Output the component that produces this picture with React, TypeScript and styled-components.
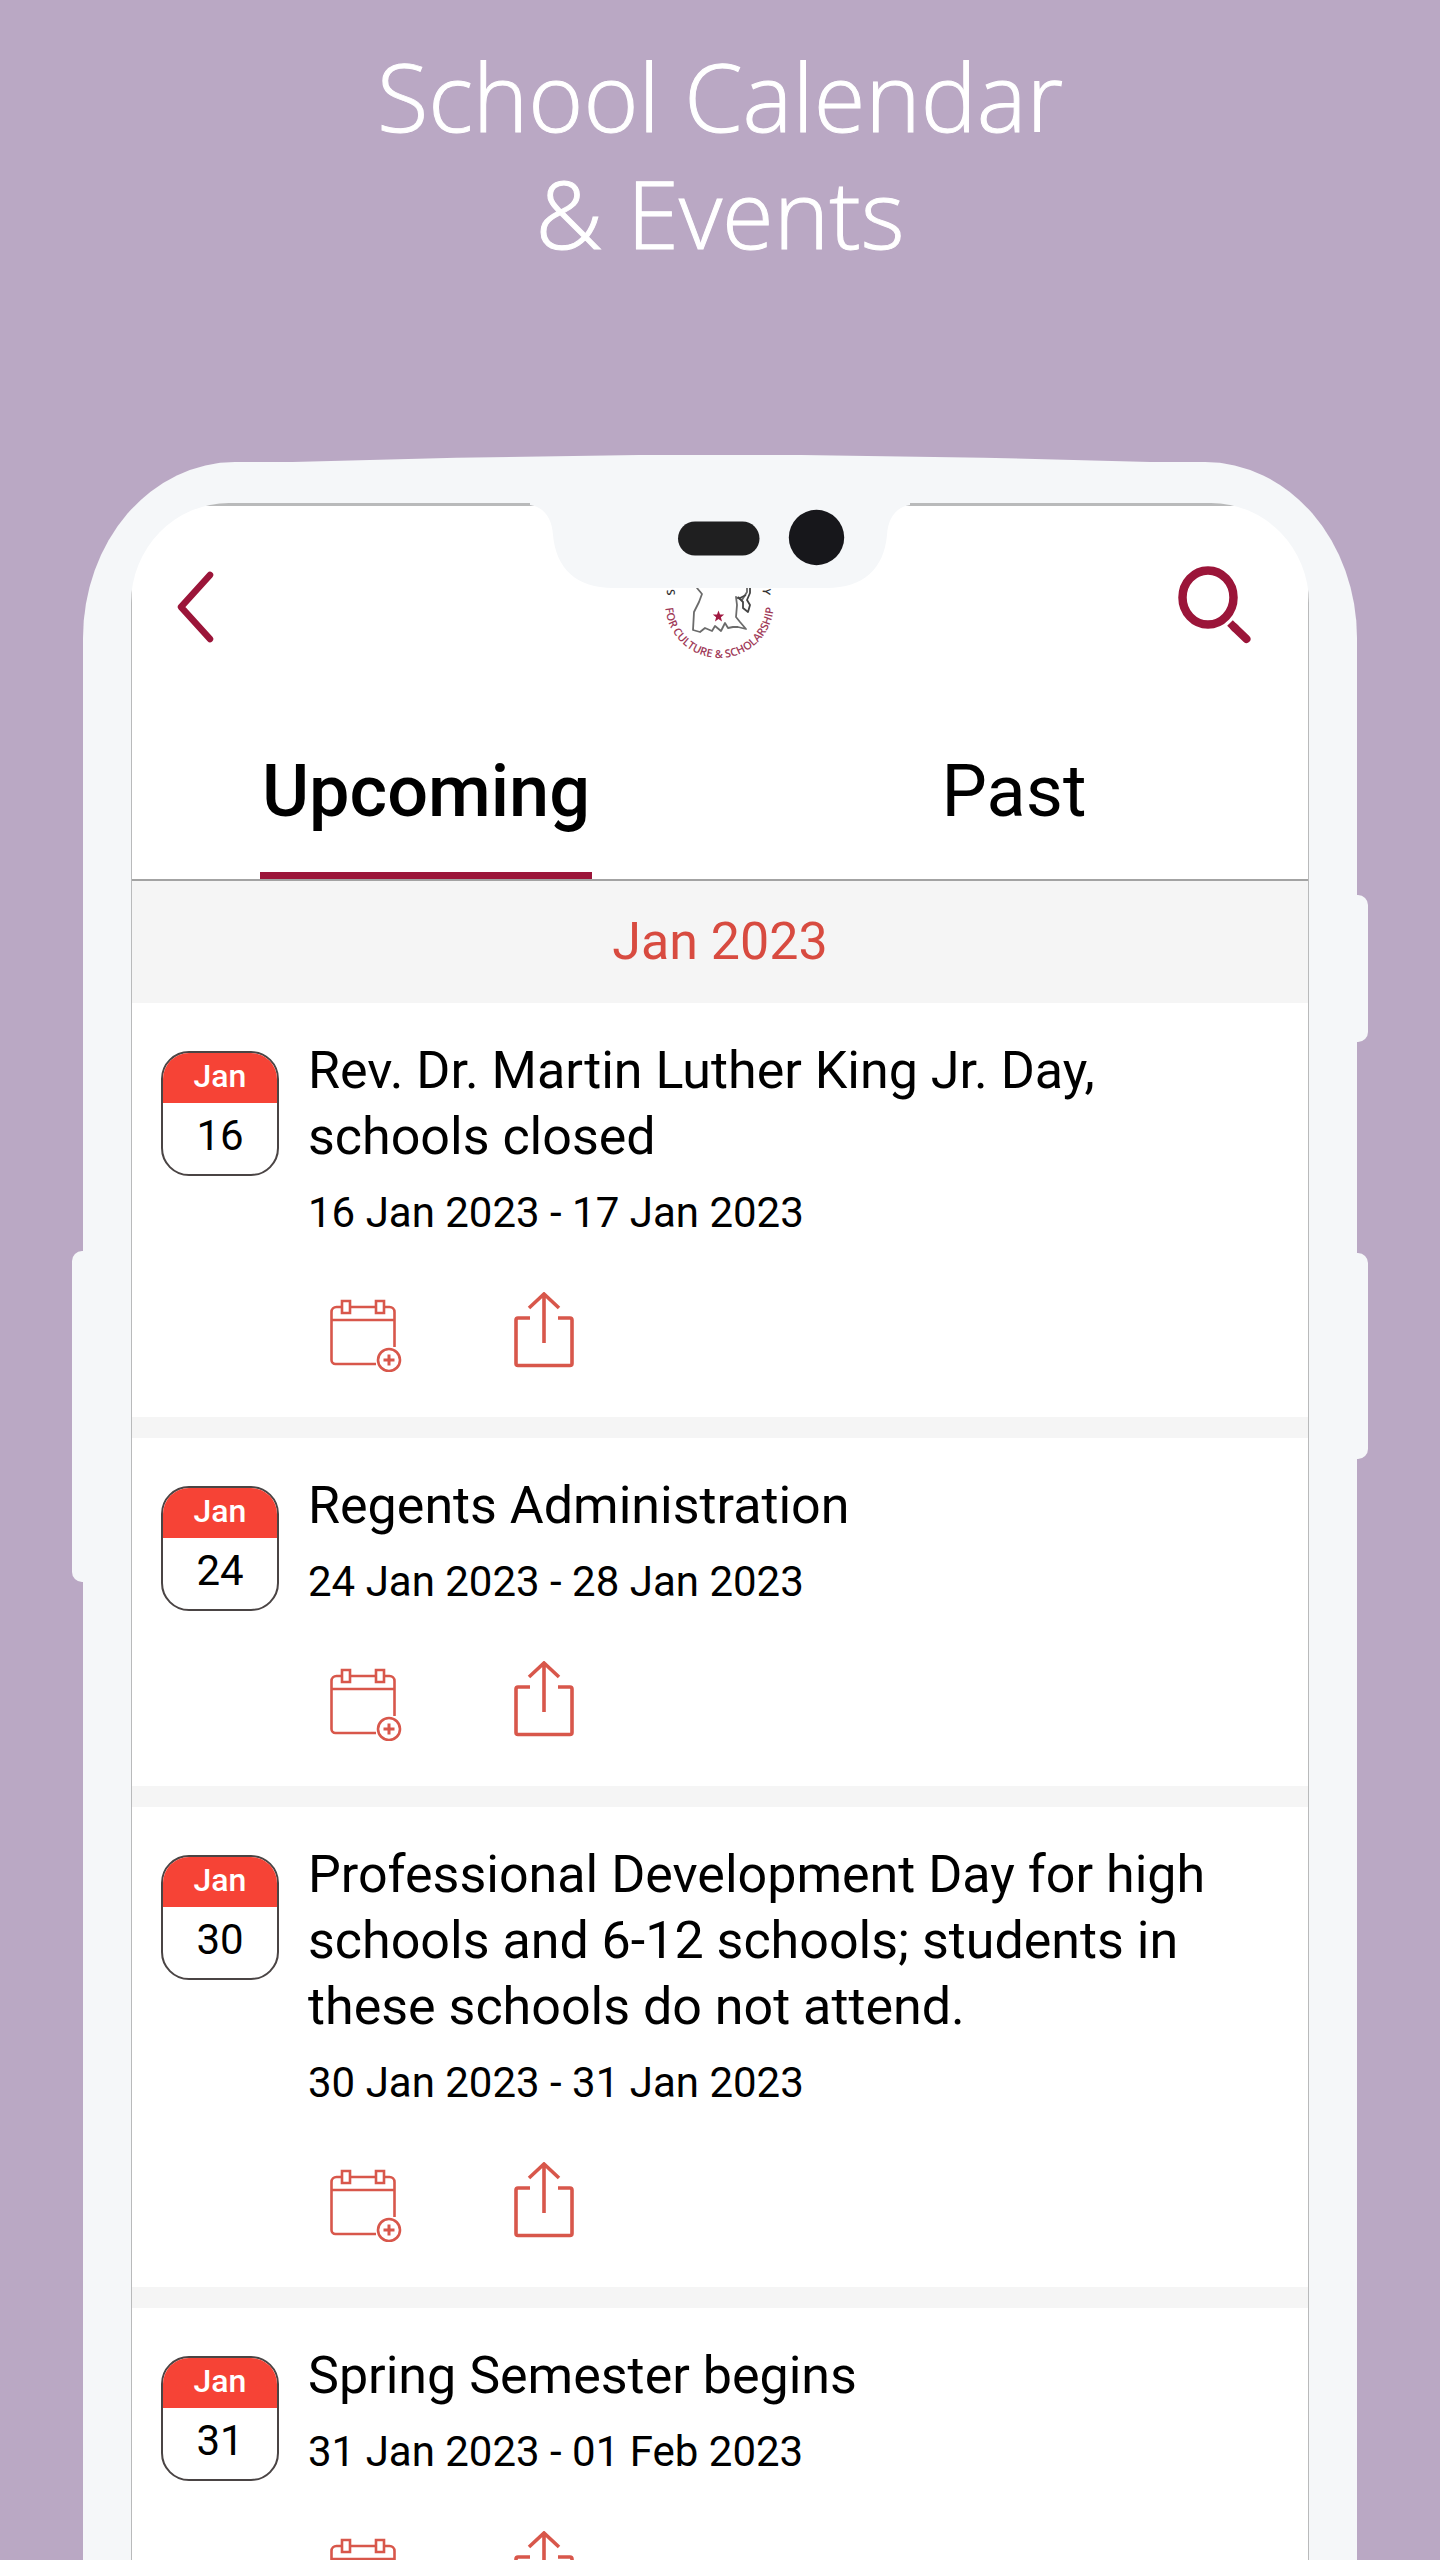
import React from 'react';
import styled, { createGlobalStyle } from 'styled-components';

const color = {
  backdrop: '#baa8c4',
  shell: '#f5f7f9',
  crimson: '#9b1539',
  badge: '#f64336',
  coral: '#d8574b',
  band: '#f5f5f5',
  line: '#a3a3a3',
};

const GlobalStyle = createGlobalStyle`
  * { box-sizing: border-box; }
  body { margin: 0; background: ${color.backdrop}; }
  button { margin: 0; padding: 0; border: 0; background: none; font: inherit; color: inherit; cursor: pointer; }
  h1, h2, h3, p, ul { margin: 0; padding: 0; font-weight: 400; }
  svg { display: block; }
`;

const Page = styled.div`
  height: 100vh;
  display: flex;
  flex-direction: column;
  overflow: hidden;
  background: ${color.backdrop};
  font-family: Roboto, 'Liberation Sans', sans-serif;
`;

const Headline = styled.h1`
  padding: 38px 24px 190px;
  color: #fff;
  font-family: 'Open Sans', 'Noto Sans', sans-serif;
  font-size: 94px;
  font-weight: 300;
  line-height: 117px;
  text-align: center;
  -webkit-text-stroke: 1px #fff;
`;

const Phone = styled.div`
  position: relative;
  flex: 1;
  min-height: 0;
  display: flex;
  margin: 0 83px;
  padding: 41px 48px 0;
  border-radius: 152px 152px 0 0 / 176px 176px 0 0;
  background: ${color.shell};

  &::before {
    content: '';
    position: absolute;
    top: -7px;
    left: 130px;
    right: 130px;
    height: 9px;
    clip-path: polygon(0 100%, 24% 30%, 42% 0, 58% 0, 76% 30%, 100% 100%);
    background: ${color.shell};
  }
`;

const SideKey = styled.span<{ $side: 'left' | 'right'; $top: number; $length: number }>`
  position: absolute;
  ${(p) => p.$side}: -11px;
  top: ${(p) => p.$top}px;
  width: 12px;
  height: ${(p) => p.$length}px;
  border-radius: ${(p) => (p.$side === 'left' ? '10px 0 0 10px' : '0 10px 10px 0')};
  background: ${color.shell};
`;

const ScreenMask = styled.div`
  flex: 1;
  min-width: 0;
  display: flex;
  overflow: hidden;
  border-radius: 98px 98px 0 0 / 100px 100px 0 0;
`;

const Screen = styled.main`
  flex: 1;
  min-width: 0;
  overflow: hidden;
  border: solid #b9babb;
  border-width: 3px 1px 0;
  background: #fff;
`;

const Notch = styled.div`
  position: absolute;
  top: 40px;
  left: 50%;
  margin-left: -190px;
`;

const TopBar = styled.header`
  height: 200px;
  display: grid;
  grid-template-columns: 1fr auto 1fr;
  align-items: center;
  padding: 0 56px 0 40px;
`;

const IconButton = styled.button<{ $end?: boolean }>`
  justify-self: ${(p) => (p.$end ? 'end' : 'start')};
`;

const Crest = styled.div`
  padding-left: 16px;
`;

const Tabs = styled.nav`
  display: grid;
  grid-template-columns: 1fr 1fr;
  justify-items: center;
  padding-top: 44px;
  border-bottom: 2px solid ${color.line};
`;

const Tab = styled.button<{ $active?: boolean }>`
  padding: 0 2px 38px;
  border-bottom: 7px solid ${(p) => (p.$active ? color.crimson : 'transparent')};
  color: #000;
  font-size: 72px;
  font-weight: ${(p) => (p.$active ? 500 : 400)};
  line-height: 84px;
`;

const Month = styled.h2`
  background: ${color.band};
  color: #d84b40;
  font-size: 52px;
  line-height: 122px;
  text-align: center;
`;

const EventList = styled.ul`
  display: flex;
  flex-direction: column;
  gap: 21px;
  background: ${color.band};
  list-style: none;
`;

const EventRow = styled.li`
  display: flex;
  align-items: flex-start;
  gap: 29px;
  padding: 35px 56px 45px 29px;
  background: #fff;
`;

const DateBadge = styled.div`
  flex: none;
  width: 118px;
  height: 125px;
  margin-top: 13px;
  overflow: hidden;
  border: 2px solid #4a4444;
  border-radius: 28px;
  background: #fff;
  text-align: center;
`;

const BadgeMonth = styled.div`
  padding-bottom: 4px;
  background: ${color.badge};
  color: #fff;
  font-size: 32px;
  font-weight: 500;
  line-height: 46px;
`;

const BadgeDay = styled.div`
  color: #000;
  font-size: 42px;
  line-height: 66px;
`;

const EventBody = styled.div`
  flex: 1;
  min-width: 0;
`;

const EventTitle = styled.h3`
  color: #000;
  font-size: 52px;
  line-height: 66px;
`;

const EventDates = styled.p`
  margin-top: 18px;
  color: #000;
  font-size: 42px;
  line-height: 50px;
`;

const Actions = styled.div`
  display: flex;
  gap: 112px;
  margin-top: 54px;
  padding-left: 22px;
`;

const BackIcon = () => (
  <svg width="44" height="76" viewBox="0 0 44 76" fill="none" stroke={color.crimson} strokeWidth="6.500" strokeLinecap="round" strokeLinejoin="round">
    <path d="M38 7 9 39l29 32" />
  </svg>
);

const SearchIcon = () => (
  <svg width="76" height="80" viewBox="0 0 76 80" fill="none" stroke={color.crimson}>
    <ellipse cx="32" cy="31.500" rx="25.500" ry="27" strokeWidth="8.500" />
    <path d="M54 57 60 63" strokeWidth="8" />
    <path d="M58 61 70.500 73" strokeWidth="8" strokeLinecap="round" />
  </svg>
);

const AddToCalendarIcon = () => (
  <svg width="72" height="80" viewBox="0 0 72 80" fill="none" stroke={color.coral} strokeWidth="2.600">
    <path d="M11 15H6.500a5 5 0 0 0-5 5v48a4 4 0 0 0 4 4H46M21 15h24M55 15h4.500a5 5 0 0 1 5 5v35M1.500 28h63" />
    <path d="M12 9h8v12h-8zM46 9h8v12h-8z" />
    <ellipse cx="59" cy="68" rx="11" ry="11" />
    <path d="M53.500 68h11M59 62.500v11" strokeWidth="3" />
  </svg>
);

const ShareIcon = () => (
  <svg width="60" height="80" viewBox="0 0 60 80" fill="none" stroke={color.coral} strokeWidth="3.600">
    <path d="M16 26H4a2 2 0 0 0-2 2V71.500a2 2 0 0 0 2 2h52a2 2 0 0 0 2-2V28a2 2 0 0 0-2-2H44" />
    <path d="M30 51V2.500M15 16 30 2 45 16" />
  </svg>
);

const SchoolCrest = () => (
  <svg width="120" height="120" viewBox="0 0 120 120" role="img" aria-label="School crest">
    <defs>
      <path id="crest-ring" d="M5 52L5 57A54.500 55 0 0 0 114 57L114 52" />
    </defs>
    <g fontFamily="'Open Sans', sans-serif" fontSize="11" fontWeight="600">
      <text fill="#a03a58">
        <textPath href="#crest-ring" startOffset="50%" textAnchor="middle">
          FOR CULTURE &amp; SCHOLARSHIP
        </textPath>
      </text>
      <text fill="#333" transform="translate(15 49) rotate(-95)">S</text>
      <text fill="#333" transform="translate(103 42) rotate(95)">Y</text>
    </g>
    <g fill="none" stroke="#6b6b6b" strokeWidth="1.800" strokeLinejoin="round">
      <path d="M37 38V42L42 48 39 56 34 66 33 84 40 86 45 82 52 85 55 80 61 85 65 77 68 82 73 81 78 81 86 83 80 76 76 71 77 59 76 51 82 54 87 46V40" />
      <path d="M78 51 83 56 83 62 88 66 90 59 87 54 90 47V40M80 52 86 49" stroke="#444" />
    </g>
    <path fill="#a01840" d="M58.500 64.500l1.500 3.900 4.200.2-3.300 2.700 1.100 4.100-3.500-2.300-3.500 2.300 1.100-4.100-3.300-2.700 4.200-.2z" />
  </svg>
);

const NotchArt = () => (
  <svg width="380" height="88" viewBox="0 0 380 88">
    <path fill={color.shell} d="M0 0v3c14 2 22 13 23 30 3 34 24 53 60 53h214c36 0 57-19 60-53 1-17 9-28 23-30V0z" />
    <rect x="148" y="19.500" width="81.500" height="34" rx="17" fill="#1f1f20" />
    <circle cx="286.500" cy="35.500" r="27.700" fill="#17171b" />
  </svg>
);

type SchoolEvent = { day: string; title: string; dates: string };

const events: SchoolEvent[] = [
  { day: '16', title: 'Rev. Dr. Martin Luther King Jr. Day, schools closed', dates: '16 Jan 2023 - 17 Jan 2023' },
  { day: '24', title: 'Regents Administration', dates: '24 Jan 2023 - 28 Jan 2023' },
  {
    day: '30',
    title: 'Professional Development Day for high schools and 6-12 schools; students in these schools do not attend.',
    dates: '30 Jan 2023 - 31 Jan 2023',
  },
  { day: '31', title: 'Spring Semester begins', dates: '31 Jan 2023 - 01 Feb 2023' },
];

const EventItem = ({ day, title, dates }: SchoolEvent) => (
  <EventRow>
    <DateBadge>
      <BadgeMonth>Jan</BadgeMonth>
      <BadgeDay>{day}</BadgeDay>
    </DateBadge>
    <EventBody>
      <EventTitle>{title}</EventTitle>
      <EventDates>{dates}</EventDates>
      <Actions>
        <button type="button" aria-label="Add to calendar">
          <AddToCalendarIcon />
        </button>
        <button type="button" aria-label="Share">
          <ShareIcon />
        </button>
      </Actions>
    </EventBody>
  </EventRow>
);

export default function App() {
  return (
    <Page>
      <GlobalStyle />
      <Headline>
        School Calendar
        <br />
        &amp; Events
      </Headline>
      <Phone>
        <SideKey $side="left" $top={789} $length={331} />
        <SideKey $side="right" $top={433} $length={147} />
        <SideKey $side="right" $top={791} $length={206} />
        <ScreenMask>
          <Screen>
            <TopBar>
              <IconButton type="button" aria-label="Back">
                <BackIcon />
              </IconButton>
              <Crest>
                <SchoolCrest />
              </Crest>
              <IconButton type="button" aria-label="Search" $end>
                <SearchIcon />
              </IconButton>
            </TopBar>
            <Tabs>
              <Tab type="button" $active>
                Upcoming
              </Tab>
              <Tab type="button">Past</Tab>
            </Tabs>
            <Month>Jan 2023</Month>
            <EventList>
              {events.map((event) => (
                <EventItem key={event.day} {...event} />
              ))}
            </EventList>
          </Screen>
        </ScreenMask>
        <Notch>
          <NotchArt />
        </Notch>
      </Phone>
    </Page>
  );
}
